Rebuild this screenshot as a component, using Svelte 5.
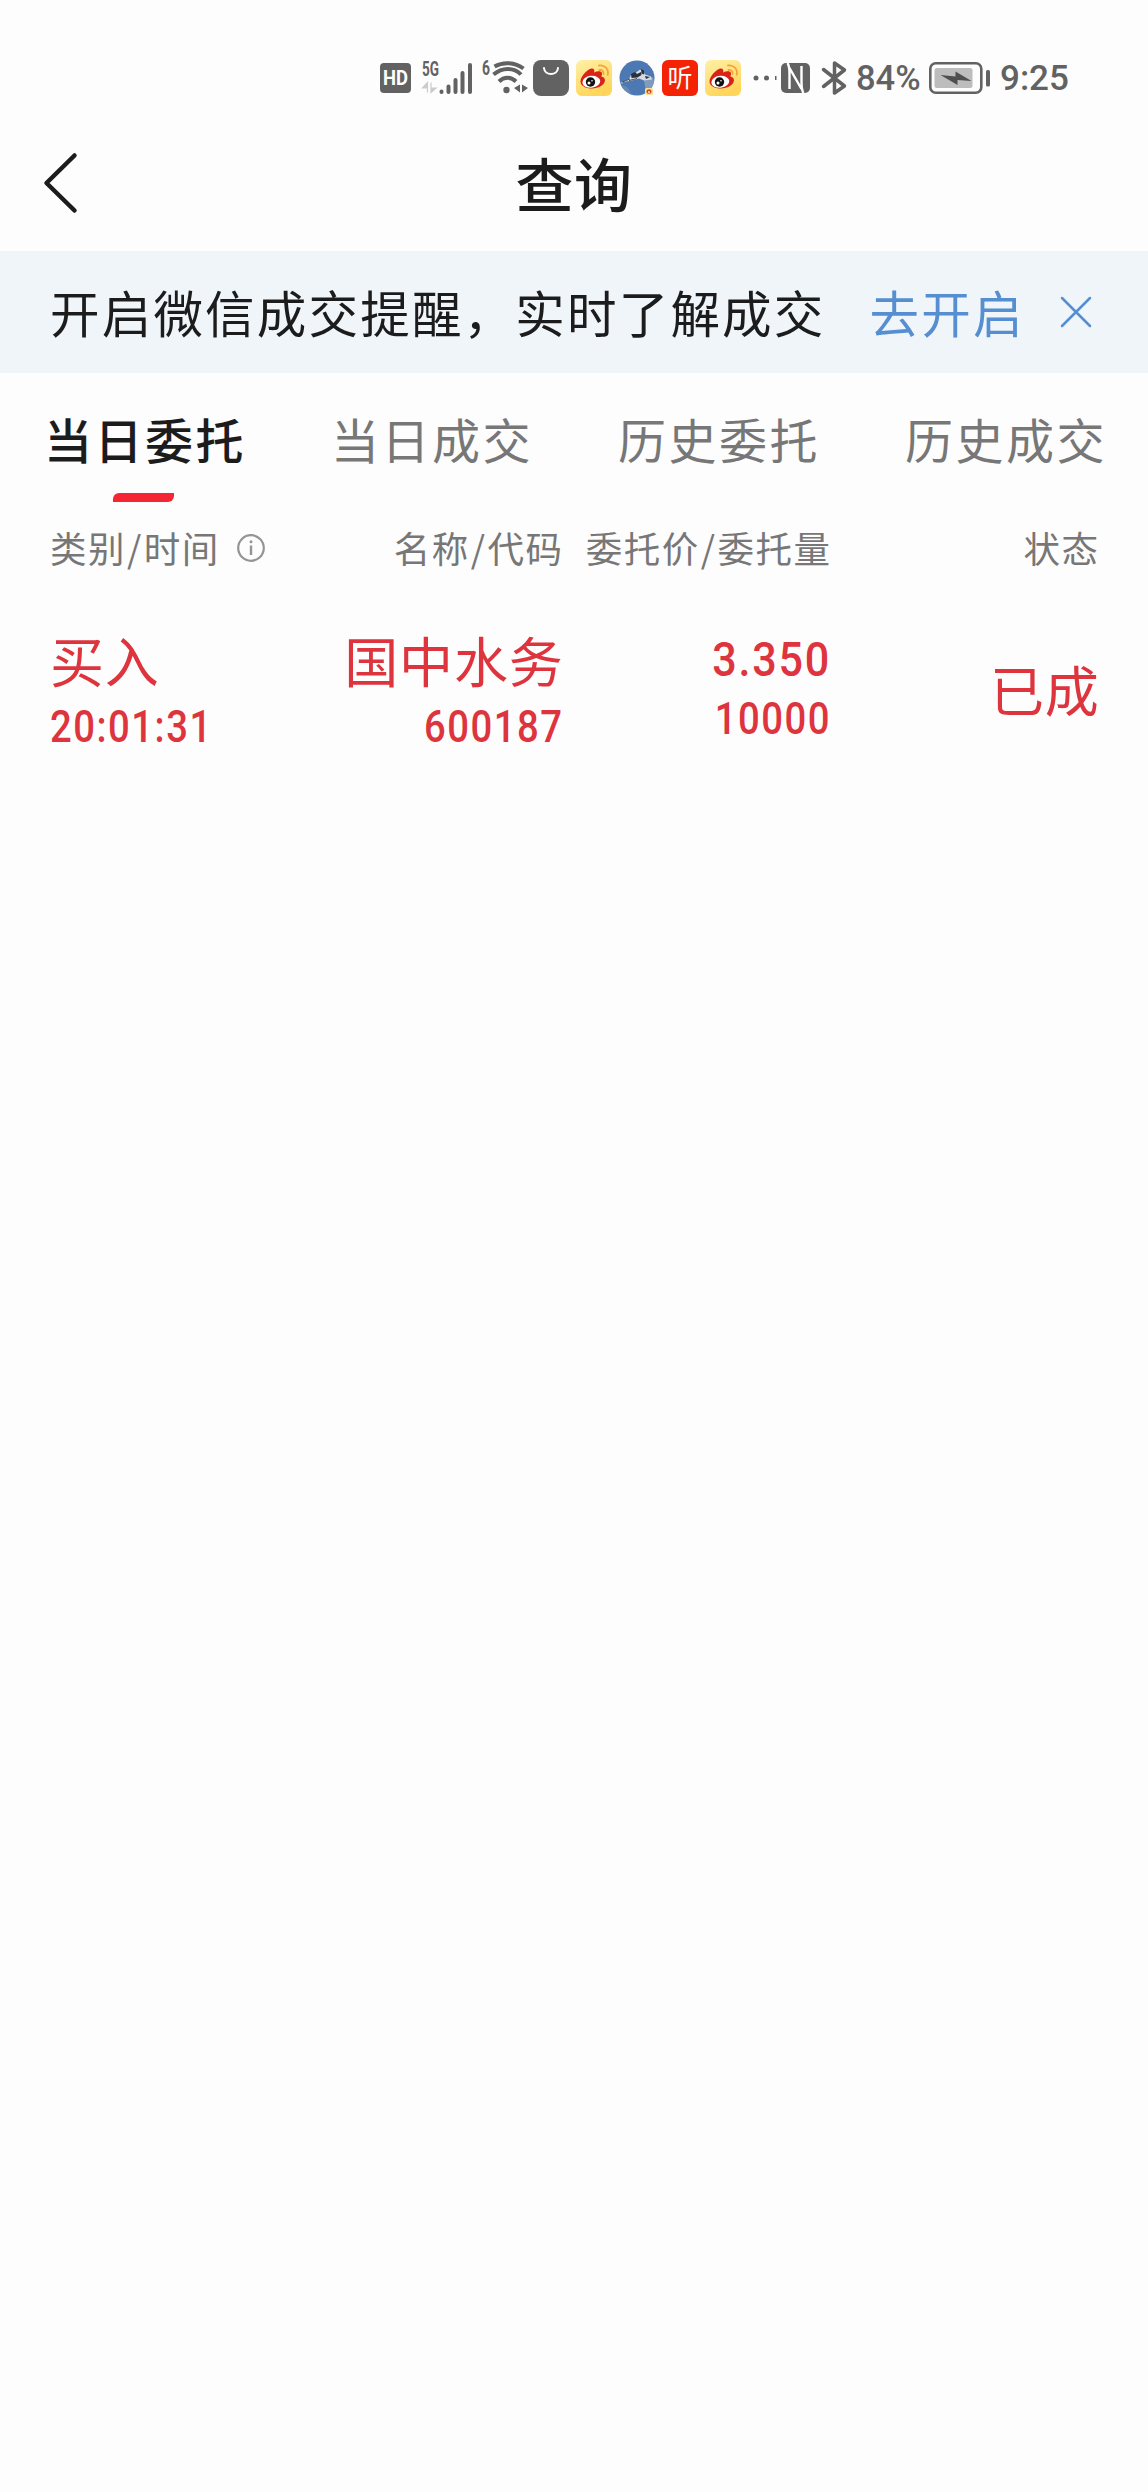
<script>
  const tabs = ['当日委托', '当日成交', '历史委托', '历史成交'];

  let activeTab = 0;
  let showBanner = true;

  const orders = [
    {
      side: '买入',
      time: '20:01:31',
      name: '国中水务',
      code: '600187',
      price: '3.350',
      amount: '10000',
      status: '已成',
    },
  ];
</script>

{#snippet weibo()}
  <svg class="app" width="36" height="36" viewBox="0 0 36 36">
    <defs>
      <linearGradient id="weibo-bg" x1="0" y1="0" x2="0.4" y2="1">
        <stop offset="0" stop-color="#fff0a8" />
        <stop offset="1" stop-color="#ffd65a" />
      </linearGradient>
    </defs>
    <rect width="36" height="36" rx="6" fill="url(#weibo-bg)" />
    <path
      d="M4.500 21.500C4.500 16 12 8.500 16 8.500c2.200 0 2.700 1.800 2.200 4 3-1.500 7.300-1.800 7.800.8.200 1-.4 2.200-.6 3.100 3 .8 3.900 2.500 3.500 4.700C28 25.500 22.500 28.500 16 28.500S4.500 25.800 4.500 21.500z"
      fill="#d92218"
    />
    <ellipse cx="15.300" cy="21.800" rx="9" ry="6" fill="#fff" transform="rotate(-6 15.3 21.8)" />
    <circle cx="14.500" cy="22" r="4.700" fill="#111" />
    <circle cx="13" cy="23" r="1.500" fill="#fff" />
    <circle cx="16" cy="20.700" r="0.800" fill="#fff" />
    <path d="M23 5.500c5.500-1 10 3.500 8.700 9.300M23.500 10c2.600-.5 4.500 1.500 4 4" fill="none" stroke="#f2a53e" stroke-width="1.800" stroke-linecap="round" />
  </svg>
{/snippet}

<div class="screen">
  <!-- System status bar -->
  <div class="status-bar">
    <svg class="hd" width="31" height="30" viewBox="0 0 31 30">
      <rect width="31" height="30" rx="4" fill="#626262" />
      <text x="3" y="22" textLength="25" lengthAdjust="spacingAndGlyphs" font-size="20" font-weight="700" fill="#fff">HD</text>
    </svg>

    <svg class="signal" width="53" height="34" viewBox="0 0 53 34">
      <text x="1" y="15" textLength="17" lengthAdjust="spacingAndGlyphs" font-size="20" font-weight="700" fill="#626262">5G</text>
      <path d="M6.500 21.500v10M6.500 21.500l-5 5.500h5zM10 21.500v10M10 31.500l5-4.500h-5z" fill="#ccc" stroke="#ccc" stroke-width="1.200" />
      <g stroke="#626262" stroke-width="4" stroke-linecap="round">
        <path d="M20.500 30.500v.5M27.500 25.500v5.500M34.500 19v12M41.500 12v19M49 4v27" />
      </g>
    </svg>

    <svg class="wifi" width="45" height="34" viewBox="0 0 45 34">
      <text x="-1" y="14" textLength="8" lengthAdjust="spacingAndGlyphs" font-size="20" font-weight="700" fill="#626262">6</text>
      <g fill="none" stroke="#626262" stroke-width="4">
        <path d="M11.500 5.500c8.500-5 20.500-4.500 29 2" />
        <path d="M10.500 13.500c8.500-7.500 20.500-7.500 27.500 0" />
        <path d="M16 20.500c5-5 12-5 17 0" />
      </g>
      <circle cx="23.500" cy="29" r="3.200" fill="#626262" />
      <path d="M37 23.500v8l-6-4.500zM39 23.500v8l6-4.500z" fill="#626262" />
    </svg>

    <svg class="bag" width="36" height="36" viewBox="0 0 36 36">
      <rect width="36" height="36" rx="8" fill="#626262" />
      <path d="M11 8c.5 8 13.500 8 14 0" fill="none" stroke="#fff" stroke-width="2" stroke-linecap="round" />
    </svg>

    {@render weibo()}

    <svg class="app" width="36" height="36" viewBox="0 0 36 36">
      <defs>
        <clipPath id="avatar"><circle cx="18" cy="18" r="17.500" /></clipPath>
      </defs>
      <g clip-path="url(#avatar)">
        <rect width="36" height="36" fill="#4c78b3" />
        <path d="M0 26c7-2 10 2 13 10H0z" fill="#6989b0" />
        <path d="M25 20l9-3 2 10-9 5z" fill="#7f9cbf" />
        <path d="M2 22.500l8-3.500 2-4 5-2.500 4-3 3 2 2 3 6 2 1 3-8 1-5-2-7 2-9 1.500-1 2z" fill="#d5dbe0" />
        <path d="M12 14l4-2 2 2 4-2 .5 3-4 2.500-6 .5zM22 9l3 1.500v4l-2.500-1zM26 16l5 1-4 2z" fill="#29323c" />
        <path d="M3 22l8-3M18 18.500l-8 2" stroke="#4a5057" />
      </g>
      <rect x="26" y="28" width="8" height="7" rx="1.500" fill="#ffdf91" />
      <ellipse cx="30" cy="31.500" rx="2.600" ry="2.200" fill="#cf4a24" />
      <circle cx="30" cy="32" r="0.900" fill="#fff" />
    </svg>

    <span class="app listen">听</span>

    {@render weibo()}

    <svg class="dots" width="24" height="6" viewBox="0 0 24 6">
      <circle cx="3" cy="3" r="2.500" fill="#626262" />
      <circle cx="13.500" cy="3" r="2.500" fill="#626262" />
      <path d="M22 1h1.500v4H22z" fill="#626262" />
    </svg>

    <svg class="nfc" width="29" height="30" viewBox="0 0 29 30">
      <rect width="29" height="30" rx="5" fill="#626262" />
      <path d="M6.500 0c2 3 2 5 2 11V26M8.500 5l12 21M22.500 30c-2-3-2-5-2-11V3" fill="none" stroke="#fff" stroke-width="2.400" />
    </svg>

    <svg class="bluetooth" width="27" height="34" viewBox="0 0 27 34">
      <path d="M2.500 8.500L23.500 25 13.500 32V2L23.500 9 2.500 25.500" fill="none" stroke="#626262" stroke-width="3.500" stroke-linejoin="round" stroke-linecap="round" />
    </svg>

    <span class="percent">84%</span>

    <svg class="battery" width="62" height="32" viewBox="0 0 62 32">
      <rect x="1.300" y="1.300" width="51" height="29.400" rx="5.500" fill="none" stroke="#626262" stroke-width="2.600" />
      <rect x="5.500" y="6" width="38" height="20" rx="2.500" fill="#bdbdbd" />
      <path d="M11.500 13l15 1.500V9.500l16 9.500-14-1v5z" fill="#4f4f4f" />
      <rect x="57" y="8" width="4" height="16.500" rx="1.500" fill="#626262" />
    </svg>

    <span class="clock">9:25</span>
  </div>

  <!-- Title bar -->
  <header>
    <button class="back" aria-label="返回">
      <svg width="36" height="64" viewBox="0 0 36 64">
        <path d="M32.500 4.500L4.500 32l28 27.500" fill="none" stroke="#1c1c1c" stroke-width="4.500" stroke-linecap="round" stroke-linejoin="round" />
      </svg>
    </button>
    <h1>查询</h1>
  </header>

  {#if showBanner}
    <div class="banner">
      <span class="message">开启微信成交提醒，实时了解成交</span>
      <button class="enable">去开启</button>
      <button class="close" aria-label="关闭" onclick={() => (showBanner = false)}>
        <svg width="32" height="32" viewBox="0 0 32 32">
          <path d="M2 2l28 28M30 2L2 30" stroke="#558fd2" stroke-width="2.500" stroke-linecap="round" />
        </svg>
      </button>
    </div>
  {/if}

  <nav>
    {#each tabs as tab, i}
      <button class="tab" class:active={activeTab === i} onclick={() => (activeTab = i)}>
        {tab}
      </button>
    {/each}
  </nav>

  <!-- Column headings -->
  <div class="row head">
    <div class="col type">
      类别<i>/</i>时间
      <svg width="30" height="30" viewBox="0 0 30 30">
        <circle cx="15" cy="15" r="12.800" fill="none" stroke="#949494" stroke-width="2.200" />
        <path d="M15 12.500v9.500" stroke="#949494" stroke-width="2.400" />
        <circle cx="15" cy="8.700" r="1.500" fill="#949494" />
      </svg>
    </div>
    <div class="col">名称<i>/</i>代码</div>
    <div class="col">委托价<i>/</i>委托量</div>
    <div class="col">状态</div>
  </div>

  {#each orders as order}
    <div class="row order">
      <div class="col type">
        <span class="label">{order.side}</span>
        <span class="num">{order.time}</span>
      </div>
      <div class="col">
        <span class="label">{order.name}</span>
        <span class="num">{order.code}</span>
      </div>
      <div class="col">
        <span class="num price">{order.price}</span>
        <span class="num amount">{order.amount}</span>
      </div>
      <div class="col status">{order.status}</div>
    </div>
  {/each}
</div>

<style>
  :global(body) {
    background: #fdfdfd;
  }

  .screen {
    min-height: 2492px;
    background: #fdfdfd;
    color: #1c1c1c;
    font-family: 'Noto Sans CJK SC', sans-serif;
    line-height: 1;
  }

  button {
    padding: 0;
    border: 0;
    background: none;
    color: inherit;
    font: inherit;
    letter-spacing: inherit;
  }

  svg {
    display: block;
    flex: none;
    overflow: visible;
  }

  .status-bar {
    display: flex;
    align-items: center;
    box-sizing: border-box;
    height: 118px;
    padding: 38px 0 0 380px;
    color: #626262;
    font-family: Roboto, sans-serif;
  }

  .signal {
    margin-left: 10px;
  }

  .wifi {
    margin-left: 9px;
  }

  .bag {
    margin-left: 5px;
  }

  .app {
    margin-left: 7px;
  }

  .listen {
    flex: none;
    width: 36px;
    height: 36px;
    border-radius: 6px;
    background: #f42306;
    color: #fff;
    font: 400 25px/33px 'Noto Sans CJK SC', sans-serif;
    text-align: center;
  }

  .dots {
    margin-left: 12px;
  }

  .nfc {
    margin-left: 4px;
  }

  .bluetooth {
    margin-left: 11px;
  }

  .percent {
    width: 66px;
    margin-left: 8px;
    font-size: 34.500px;
    font-weight: 500;
    white-space: nowrap;
  }

  .battery {
    margin-left: 7px;
  }

  .clock {
    margin-left: 9px;
    font-size: 35px;
    font-weight: 500;
  }

  header {
    display: grid;
    grid-template-columns: 200px 1fr 200px;
    align-items: center;
    height: 133px;
  }

  .back {
    padding: 0 0 3px 42px;
  }

  h1 {
    margin: 0;
    padding: 0 0 6px;
    font-size: 58px;
    font-weight: 500;
    letter-spacing: 0.500px;
    text-align: center;
  }

  .banner {
    display: flex;
    align-items: center;
    height: 122px;
    padding-left: 50px;
    background: #f0f5fa;
    font-size: 49.500px;
    letter-spacing: 2.200px;
  }

  .message,
  .enable {
    padding-bottom: 1px;
  }

  .enable {
    margin-left: 44px;
    color: #558fd2;
  }

  .close {
    margin-left: 35px;
  }

  nav {
    display: grid;
    grid-template-columns: repeat(4, 1fr);
    height: 137px;
  }

  .tab {
    display: flex;
    flex-direction: column;
    align-items: center;
    padding: 41px 0 0 3px;
    color: #777;
    font-size: 48px;
    letter-spacing: 2.500px;
    white-space: nowrap;
  }

  .active {
    color: #1c1c1c;
    font-weight: 500;
  }

  .active::after {
    content: '';
    width: 61px;
    height: 9px;
    margin: 31px 3px 0 0;
    border-radius: 6px 0;
    background: #f52633;
  }

  .row {
    display: grid;
    grid-template-columns: 270px 243.500px 268px 268px;
    padding-left: 50px;
    letter-spacing: 1.500px;
  }

  .col {
    display: flex;
    flex-direction: column;
    align-items: flex-end;
  }

  .type {
    align-items: flex-start;
  }

  .head {
    padding-top: 20px;
    color: #777;
    font-size: 36.500px;
  }

  .head .col {
    flex-direction: row;
    justify-content: flex-end;
    align-items: center;
    white-space: nowrap;
  }

  .head .type {
    justify-content: flex-start;
  }

  .head i {
    padding: 0 1px;
    font-style: normal;
  }

  .head svg {
    margin-left: 16px;
  }

  .order {
    padding-top: 66px;
    color: #dd343d;
  }

  .label {
    font-size: 54px;
    letter-spacing: 0.800px;
  }

  /* condensed figures */
  .num {
    margin-top: 19px;
    font-family: Roboto, sans-serif;
    font-size: 43.500px;
    font-weight: 500;
    letter-spacing: 1.700px;
    transform: scaleX(0.88);
    transform-origin: right;
  }

  .type .num {
    transform-origin: left;
  }

  .price {
    margin-top: 2px;
    font-size: 49px;
    letter-spacing: 2px;
  }

  .amount {
    margin-top: 14px;
  }

  .status {
    padding-top: 29px;
    font-size: 54px;
    letter-spacing: 0.800px;
  }
</style>
